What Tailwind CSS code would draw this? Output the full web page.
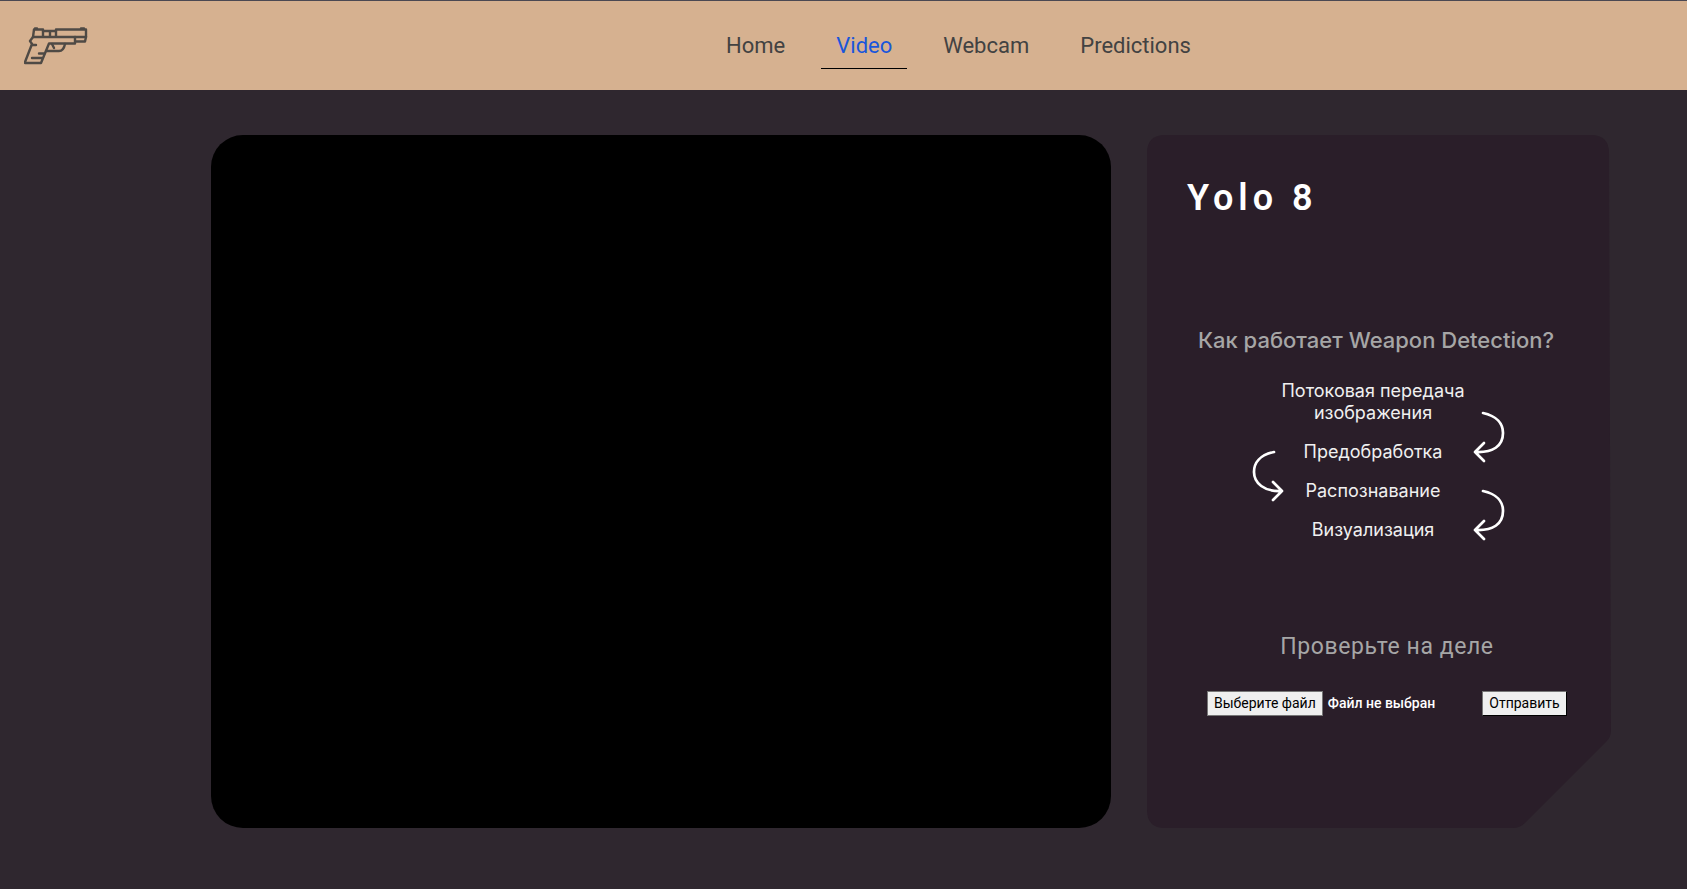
<!DOCTYPE html>
<html lang="ru">
<head>
<meta charset="utf-8">
<meta name="viewport" content="width=device-width, initial-scale=1">
<title>Weapon Detection</title>
<script src="https://cdn.jsdelivr.net/npm/@tailwindcss/browser@4"></script>
</head>
<body class="flex min-h-screen flex-col bg-[#2f272f] font-[Roboto,sans-serif]">
<header class="flex h-[90px] items-center border-t border-[#4b4852] bg-[#d6b190] px-6">
  <a href="#" aria-label="Weapon Detection" class="w-[230px] shrink-0">
    <svg class="h-[38px] w-[64px]" viewBox="24 27 64 38" fill="none" stroke="#4f4a45" stroke-width="2.400" stroke-linejoin="round" stroke-linecap="round">
      <path d="M34 29.5H43V31H56V29.5H86V37H33Z"/>
      <path d="M35 28.5H37M81 28.5H84M43 31V36M50 32V36M56 31V36"/>
      <path d="M33 37L30 41L32 44L25 62V63H41L49 43.500H75V37M86 37L85 41.500H75"/>
      <path d="M65 44C64 49 62 51 59 51H46M52 44L54 48M32 45H36M39 53.500H44M32 58H42"/>
    </svg>
  </a>
  <nav aria-label="Главное меню" class="flex flex-1 justify-center gap-[21px] text-[22px] leading-[26px] text-[#424242]">
    <a href="#" class="border-b border-transparent px-[15px] pt-[11px] pb-[9px]">Home</a>
    <a href="#" aria-current="page" class="border-b border-black px-[15px] pt-[11px] pb-[9px] text-[#1a56db]">Video</a>
    <a href="#" class="border-b border-transparent px-[15px] pt-[11px] pb-[9px]">Webcam</a>
    <a href="#" class="border-b border-transparent px-[15px] pt-[11px] pb-[9px]">Predictions</a>
  </nav>
</header>

<main class="flex flex-1 gap-9 pt-[45px] pr-[76px] pb-[61px] pl-[12.5%]">
  <section aria-label="Видео" class="flex-1 rounded-[32px] bg-black"></section>

  <aside class="relative isolate w-[464px] shrink-0 px-10 pt-[41px]">
    <svg class="absolute inset-0 -z-10 h-full w-full" viewBox="0 0 464 693" preserveAspectRatio="none" fill="#2a1e29" aria-hidden="true">
      <path d="M18 0H444Q462 0 462 18L464 596Q464 602 459 607L378 688Q373 693 366 693H18Q0 693 0 675V18Q0 0 18 0Z"/>
    </svg>

    <h1 class="text-[36px] leading-[44px] font-semibold tracking-[5px] text-white">Yolo 8</h1>

    <h2 class="mt-[106px] mr-1.5 text-center font-[Inter,sans-serif] text-[22px] leading-7 font-medium whitespace-nowrap text-[#a6a6a6]">Как работает Weapon Detection?</h2>

    <div class="mt-[26px] ml-16 grid w-[256px]">
      <ol class="col-start-1 row-start-1 mr-3 flex flex-col gap-[17px] text-center font-[Inter,sans-serif] text-[18px] leading-[22px] text-[#f0f0f0]">
        <li>Потоковая передача<br>изображения</li>
        <li>Предобработка</li>
        <li>Распознавание</li>
        <li>Визуализация</li>
      </ol>
      <svg class="col-start-1 row-start-1 h-[161px] w-[256px]" viewBox="0 0 256 161" fill="none" stroke="#fff" stroke-width="2.700" stroke-linecap="round" stroke-linejoin="round" aria-hidden="true">
        <path d="M232 33C246 36 252 44 252 53C252 66 242 73 224 72M233 63L224 72L233 81"/>
        <path d="M23 72C9 75 3 83 3 92C3 103 13 112 31 111M22 102L31 111L22 120"/>
        <path d="M232 111C246 114 252 122 252 131C252 144 242 151 224 150M233 141L224 150L233 159"/>
      </svg>
    </div>

    <form class="mt-[92px]">
      <h2 class="ml-4 text-center text-[23px] leading-7 tracking-wide text-[#a6a6a6]">Проверьте на деле</h2>
      <div class="mt-[30px] ml-5 flex items-center text-[14px] leading-[23px]">
        <input id="file" type="file" class="peer sr-only">
        <label for="file" class="flex items-center gap-[5px] font-medium whitespace-nowrap text-white">
          <span class="border border-[#767676] bg-[#efefef] px-1.5 font-normal text-black">Выберите файл</span>
          Файл не выбран
        </label>
        <button type="submit" class="ml-[47px] border border-t-[#767676] border-r-black border-b-black border-l-[#767676] bg-[#efefef] px-1.5 text-black">Отправить</button>
      </div>
    </form>
  </aside>
</main>
</body>
</html>
